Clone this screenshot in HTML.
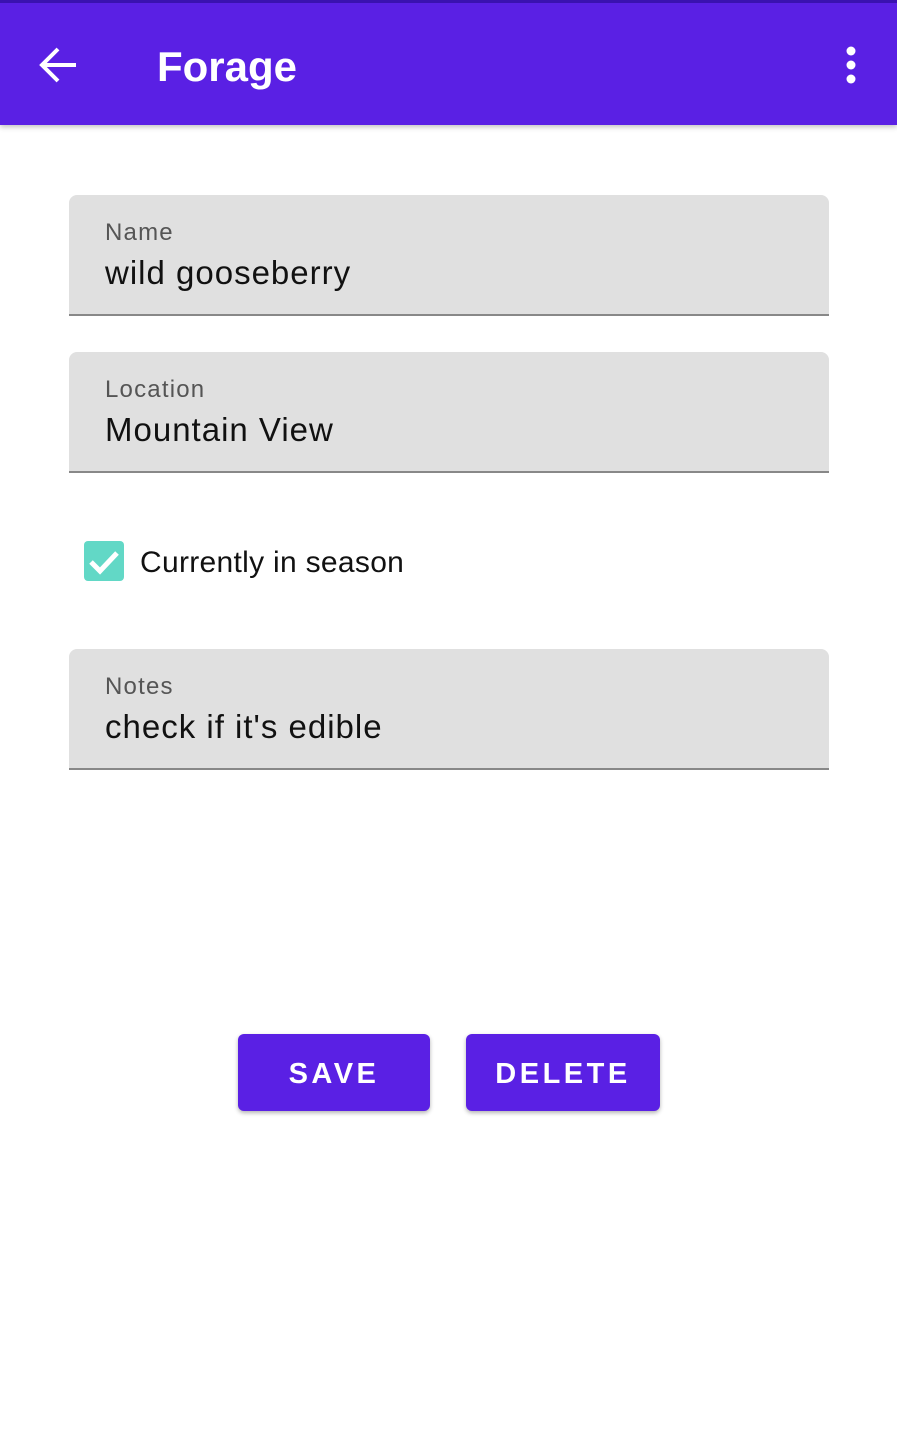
<!DOCTYPE html>
<html><head><style>
body{margin:0;width:897px;height:1437px;background:#fff;font-family:"Liberation Sans",sans-serif;position:relative;overflow:hidden}
.bar{position:absolute;left:0;top:0;width:897px;height:125px;background:#5a20e4;border-top:3px solid #3a12b0;box-sizing:border-box;box-shadow:0 2px 5px rgba(0,0,0,.25)}
.title{position:absolute;left:157px;top:40px;color:#fff;font-size:42px;font-weight:bold;letter-spacing:0}
.field{position:absolute;left:69px;width:760px;height:121px;background:#e0e0e0;border-radius:8px 8px 0 0;border-bottom:2px solid #888;box-sizing:border-box}
.lab{position:absolute;left:36px;top:24px;font-size:24px;color:#555;letter-spacing:1.2px}
.val{position:absolute;left:36px;top:59px;font-size:33px;color:#111;letter-spacing:1px}
.btn{position:absolute;top:1034px;height:77px;background:#5a20e4;border-radius:6px;color:#fff;font-size:29px;font-weight:bold;letter-spacing:3.5px;text-align:center;line-height:81px;box-shadow:0 2px 4px rgba(0,0,0,.3)}
</style></head><body>
<div class="bar">
<svg style="position:absolute;left:38px;top:42px" width="42" height="40" viewBox="0 0 42 40"><path d="M38 20H5M20 4L4 20l16 16" stroke="#fff" stroke-width="4" fill="none"/></svg>
<div class="title">Forage</div>
<svg style="position:absolute;left:842px;top:42px" width="18" height="40"><circle cx="9" cy="6" r="4.5" fill="#fff"/><circle cx="9" cy="20" r="4.5" fill="#fff"/><circle cx="9" cy="34" r="4.5" fill="#fff"/></svg>
</div>
<div class="field" style="top:195px"><div class="lab">Name</div><div class="val">wild gooseberry</div></div>
<div class="field" style="top:352px"><div class="lab">Location</div><div class="val">Mountain View</div></div>
<div style="position:absolute;left:84px;top:541px;width:40px;height:40px;background:#62d8c6;border-radius:4px"><svg width="40" height="40"><path d="M7 21l9 9L33 12" stroke="#fff" stroke-width="5" fill="none"/></svg></div>
<div style="position:absolute;left:140px;top:546px;font-size:30px;color:#111;letter-spacing:0.3px">Currently in season</div>
<div class="field" style="top:649px"><div class="lab">Notes</div><div class="val">check if it's edible</div></div>
<div class="btn" style="left:238px;width:192px">SAVE</div>
<div class="btn" style="left:466px;width:194px">DELETE</div>
</body></html>
